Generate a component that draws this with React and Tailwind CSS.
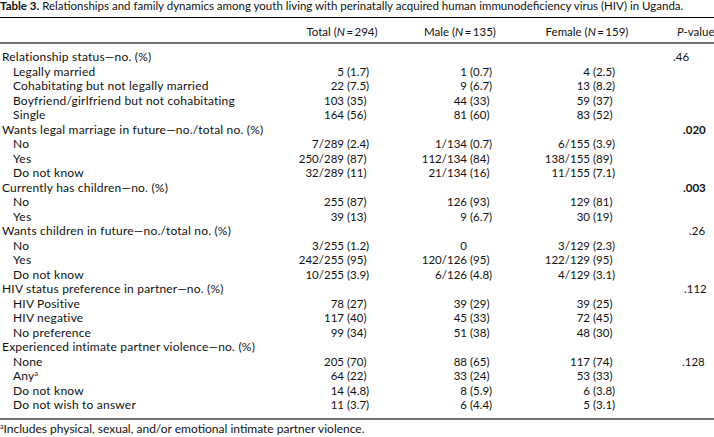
import React from "react";

const rows = [
  { g: "Relationship status—no. (%)", p: ".46", pl: 12 },
  { l: "Legally married", v: [["5", "(1.7)"], ["1", "(0.7)"], ["4", "(2.5)"]] },
  { l: "Cohabitating but not legally married", v: [["22", "(7.5)"], ["9", "(6.7)"], ["13", "(8.2)"]] },
  { l: "Boyfriend/girlfriend but not cohabitating", v: [["103", "(35)"], ["44", "(33)"], ["59", "(37)"]] },
  { l: "Single", v: [["164", "(56)"], ["81", "(60)"], ["83", "(52)"]] },
  { g: "Wants legal marriage in future—no./total no. (%)", p: ".020", pl: 22, b: true },
  { l: "No", v: [["7/289", "(2.4)"], ["1/134", "(0.7)"], ["6/155", "(3.9)"]] },
  { l: "Yes", v: [["250/289", "(87)"], ["112/134", "(84)"], ["138/155", "(89)"]] },
  { l: "Do not know", v: [["32/289", "(11)"], ["21/134", "(16)"], ["11/155", "(7.1)"]] },
  { g: "Currently has children—no. (%)", p: ".003", pl: 22, b: true },
  { l: "No", v: [["255", "(87)"], ["126", "(93)"], ["129", "(81)"]] },
  { l: "Yes", v: [["39", "(13)"], ["9", "(6.7)"], ["30", "(19)"]] },
  { g: "Wants children in future—no./total no. (%)", p: ".26", pl: 28 },
  { l: "No", v: [["3/255", "(1.2)"], ["0", ""], ["3/129", "(2.3)"]] },
  { l: "Yes", v: [["242/255", "(95)"], ["120/126", "(95)"], ["122/129", "(95)"]] },
  { l: "Do not know", v: [["10/255", "(3.9)"], ["6/126", "(4.8)"], ["4/129", "(3.1)"]] },
  { g: "HIV status preference in partner—no. (%)", p: ".112", pl: 23 },
  { l: "HIV Positive", v: [["78", "(27)"], ["39", "(29)"], ["39", "(25)"]] },
  { l: "HIV negative", v: [["117", "(40)"], ["45", "(33)"], ["72", "(45)"]] },
  { l: "No preference", v: [["99", "(34)"], ["51", "(38)"], ["48", "(30)"]] },
  { g: "Experienced intimate partner violence—no. (%)" },
  { l: "None", v: [["205", "(70)"], ["88", "(65)"], ["117", "(74)"]], p: ".128", pl: 21 },
  { l: "Any", sup: "a", v: [["64", "(22)"], ["33", "(24)"], ["53", "(33)"]] },
  { l: "Do not know", v: [["14", "(4.8)"], ["8", "(5.9)"], ["6", "(3.8)"]] },
  { l: "Do not wish to answer", v: [["11", "(3.7)"], ["6", "(4.4)"], ["5", "(3.1)"]] },
];

function Cell({ v }) {
  return (
    <div className="flex">
      <span className="w-[52px] text-right">{v[0]}</span>
      <span className="ml-[3px]">{v[1]}</span>
    </div>
  );
}

export default function App() {
  return (
    <div
      className="w-[714px] h-[437px] overflow-hidden bg-white text-[#111] text-[11.5px]"
      style={{ fontFamily: "Lato, 'Noto Sans', sans-serif" }}
    >
      <div className="-mt-[1px] h-[14px] leading-[14px] whitespace-nowrap">
        <span className="font-bold">Table 3.</span>{" "}
        Relationships and family dynamics among youth living with perinatally acquired human immunodeficiency virus (HIV) in Uganda.
      </div>
      <div className="mt-[4px] border-t border-black">
        <div className="grid grid-cols-[292px_123px_123px_123px_1fr] h-[24px] pt-[7px] leading-[14px]">
          <div />
          <div className="w-[100px] text-center whitespace-nowrap">
            Total (<i>N</i>{"\u2009=\u2009"}294)
          </div>
          <div className="w-[90px] text-center whitespace-nowrap">
            Male (<i>N</i>{"\u2009=\u2009"}135)
          </div>
          <div className="w-[98px] text-center whitespace-nowrap">
            Female (<i>N</i>{"\u2009=\u2009"}159)
          </div>
          <div className="pl-[16px] whitespace-nowrap">
            <i>P</i>-value
          </div>
        </div>
        <div className="border-t-2 border-[#707070] pt-[6px] pb-[5px] leading-[14.5px]">
          {rows.map((r, i) => (
            <div key={i} className="grid grid-cols-[292px_123px_123px_123px_1fr] h-[14.5px] whitespace-nowrap">
              {r.g ? (
                <div className="pl-[2px] col-span-4 text-[12px] tracking-[0.2px]">{r.g}</div>
              ) : (
                <>
                  <div className="pl-[13px] text-[12px] tracking-[0.2px]">
                    {r.l}
                    {r.sup && (
                      <span className="relative -top-[4px] text-[7px] leading-none">{r.sup}</span>
                    )}
                  </div>
                  {r.v.map((c, j) => (
                    <Cell key={j} v={c} />
                  ))}
                </>
              )}
              <div className={r.b ? "font-bold" : ""} style={{ paddingLeft: r.pl || 0 }}>
                {r.p || ""}
              </div>
            </div>
          ))}
        </div>
        <div className="border-t-2 border-[#707070] pt-[2px] leading-[14px] whitespace-nowrap text-[12px]">
          <span className="relative -top-[4px] text-[7px] leading-none">a</span>
          Includes physical, sexual, and/or emotional intimate partner violence.
        </div>
      </div>
    </div>
  );
}
